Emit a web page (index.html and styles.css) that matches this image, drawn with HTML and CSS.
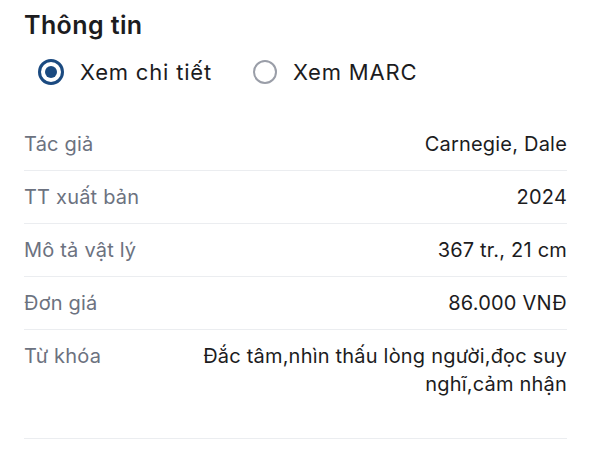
FILE: index.html
```html
<!DOCTYPE html>
<html lang="vi">
<head>
<meta charset="utf-8">
<link rel="stylesheet" href="styles.css">
</head>
<body>
<div class="panel">
  <h2 class="title">Thông tin</h2>
  <div class="radios">
    <label class="radio checked"><span class="dot"></span><span>Xem chi tiết</span></label>
    <label class="radio"><span class="dot"></span><span>Xem MARC</span></label>
  </div>
  <div class="rows">
    <div class="row"><div class="key">Tác giả</div><div class="val">Carnegie, Dale</div></div>
    <div class="row"><div class="key">TT xuất bản</div><div class="val">2024</div></div>
    <div class="row"><div class="key">Mô tả vật lý</div><div class="val">367 tr., 21 cm</div></div>
    <div class="row"><div class="key">Đơn giá</div><div class="val">86.000 VNĐ</div></div>
    <div class="row last"><div class="key">Từ khóa</div><div class="val">Đắc tâm,nhìn thấu lòng người,đọc suy nghĩ,cảm nhận</div></div>
  </div>
</div>
</body>
</html>
```
FILE: styles.css
```css
html, body { margin: 0; padding: 0; background: #fff; }
body { font-family: Inter, "Noto Sans", sans-serif; color: #1c1c1e; }
.panel { padding: 8px 23px 0 24px; }
.title { margin: 0; font-size: 25px; font-weight: 600; line-height: 34px; letter-spacing: 0.4px; color: #1c1c1e; }
.radios { display: flex; gap: 41px; padding: 15px 0 0 14px; height: 30px; align-items: center; }
.radio { display: flex; align-items: center; gap: 16px; font-size: 22px; letter-spacing: 0.8px; color: #1c1c1e; }
.dot { width: 20px; height: 20px; border-radius: 50%; border: 2.5px solid #9a9ea8; box-sizing: content-box; display: flex; align-items: center; justify-content: center; }
.radio.checked .dot { border: 3.5px solid #1b4a80; width: 20px; height: 20px; }
.radio.checked .dot::after { content: ""; width: 12px; height: 12px; border-radius: 50%; background: #1b4a80; }
.rows { margin-top: 31px; }
.row { display: flex; justify-content: space-between; gap: 24px; padding: 12px 0 12px; border-bottom: 1px solid #ebedf0; font-size: 20px; line-height: 28px; letter-spacing: 0.2px; }
.row.last { padding-bottom: 40px; }
.key { color: #6c7280; flex: 0 0 auto; white-space: nowrap; }
.val { text-align: right; color: #1c1c1e; max-width: 375px; }
```
